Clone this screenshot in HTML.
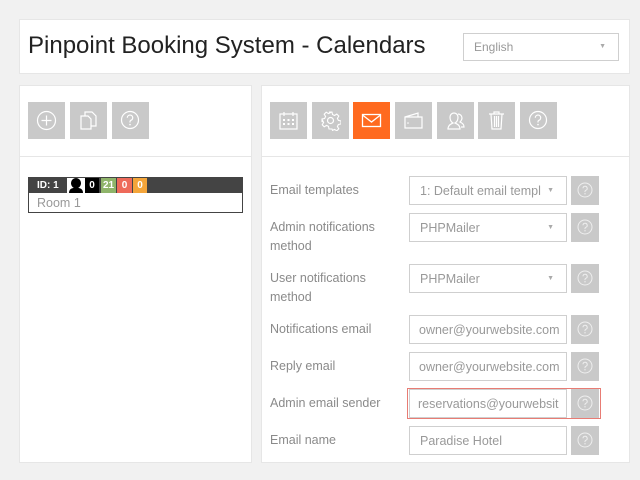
<!DOCTYPE html>
<html><head><meta charset="utf-8"><style>
*{margin:0;padding:0;box-sizing:border-box}
body{width:640px;height:480px;background:#f1f1f1;font-family:"Liberation Sans",sans-serif;position:relative;overflow:hidden}
.a{position:absolute}
.box{background:#fff;border:1px solid #e6e6e6}
.btn{position:absolute;width:37px;height:37px;background:#c9c9c9;top:102px}
.btn svg{position:absolute;left:8px;top:8px}
.lbl{position:absolute;left:270px;font-size:12.5px;color:#8a8a8a;line-height:19px}
.in{position:absolute;left:409px;width:158px;height:29px;border:1px solid #cfcfcf;background:#fff;font-size:12.5px;color:#999;padding-left:10px;line-height:28px;white-space:nowrap;overflow:hidden}
.in .ar{position:absolute;right:12px;top:0;font-size:7px;color:#aaa}
.hb{position:absolute;left:571px;width:28px;height:29px;background:#c9c9c9}
.hb svg{position:absolute;left:6px;top:6px}
</style></head><body>
<div class="a box" style="left:19px;top:19px;width:611px;height:55px"></div>
<div class="a" style="left:28px;top:32px;font-size:24px;color:#222;letter-spacing:0px">Pinpoint Booking System - Calendars</div>
<div class="a" style="left:463px;top:33px;width:156px;height:28px;border:1px solid #cfcfcf;background:#fff;font-size:12px;color:#999;padding-left:10px;line-height:26px">English<span style="position:absolute;right:12px;font-size:7px;color:#aaa">▼</span></div>

<div class="a box" style="left:19px;top:85px;width:233px;height:378px"></div>
<div class="a" style="left:20px;top:156px;width:231px;height:1px;background:#e6e6e6"></div>
<div class="a box" style="left:261px;top:85px;width:369px;height:378px"></div>
<div class="a" style="left:262px;top:156px;width:367px;height:1px;background:#e6e6e6"></div>

<svg width="0" height="0" style="position:absolute"><defs>
<g id="q"><circle cx="10" cy="10" r="8.5" fill="none" stroke="#fff" stroke-width="1.2"/><path d="M7.3 7.8a2.7 2.7 0 1 1 3.6 2.5c-.7.3-.9.7-.9 1.4v.8" fill="none" stroke="#fff" stroke-width="1.2"/><circle cx="10" cy="14.6" r=".8" fill="#fff"/></g>
<g id="s"><circle cx="8" cy="8" r="7" fill="none" stroke="#eee" stroke-width="1"/><path d="M6 6.3a2.1 2.1 0 1 1 2.8 2c-.5.2-.8.6-.8 1.1v.7" fill="none" stroke="#eee" stroke-width="1"/><circle cx="8" cy="11.8" r=".7" fill="#eee"/></g>
</defs></svg>

<div class="btn" style="left:28px"><svg width="21" height="21"><circle cx="10.5" cy="10.5" r="9" fill="none" stroke="#fff" stroke-width="1.2"/><path d="M10.5 5.5v10M5.5 10.5h10" stroke="#fff" stroke-width="1.2"/></svg></div>
<div class="btn" style="left:70px"><svg width="21" height="21"><path d="M3 6h7l3 3v10H3z M7 6V2h7l4 4v10h-5" fill="none" stroke="#fff" stroke-width="1.2"/></svg></div>
<div class="btn" style="left:112px"><svg width="21" height="21"><use href="#q"/></svg></div>

<div class="btn" style="left:270px"><svg width="21" height="21"><rect x="2" y="4" width="17" height="15" fill="none" stroke="#fff" stroke-width="1.2"/><path d="M6 2v4M15 2v4" stroke="#fff" stroke-width="1.2"/><g fill="#fff"><rect x="5" y="9" width="2" height="2"/><rect x="9.5" y="9" width="2" height="2"/><rect x="14" y="9" width="2" height="2"/><rect x="5" y="13" width="2" height="2"/><rect x="9.5" y="13" width="2" height="2"/><rect x="14" y="13" width="2" height="2"/></g></svg></div>
<div class="btn" style="left:312px"><svg width="21" height="21"><circle cx="10.5" cy="10.5" r="3" fill="none" stroke="#fff" stroke-width="1.2"/><path d="M9 2h3l.5 2.5 2 1 2.3-1.4 2 2-1.4 2.3 1 2 2.6.6v3l-2.6.5-1 2 1.4 2.3-2 2-2.3-1.4-2 1L12 19H9l-.5-2.6-2-1-2.3 1.4-2-2 1.4-2.3-1-2L2 12V9l2.6-.5 1-2L4.2 4.2l2-2 2.3 1.4 2-1z" fill="none" stroke="#fff" stroke-width="1.1"/></svg></div>
<div class="btn" style="left:353px;background:#ff6a1f"><svg width="21" height="21"><rect x="1.5" y="4.5" width="18" height="12" fill="none" stroke="#fff" stroke-width="1.3"/><path d="M1.5 5l9 7 9-7" fill="none" stroke="#fff" stroke-width="1.3"/></svg></div>
<div class="btn" style="left:395px"><svg width="21" height="21"><path d="M2 7h17v11H2z M2 7l13-4v4" fill="none" stroke="#fff" stroke-width="1.2"/><circle cx="5" cy="13" r=".8" fill="#fff"/></svg></div>
<div class="btn" style="left:437px"><svg width="21" height="21"><path d="M3 19c0-4 3-5 5-6-2-1-3-3-3-6a4 4 0 0 1 8 0c0 3-1 5-3 6 2 1 5 2 5 6z M13 4a4 4 0 0 1 4 4c0 2-1 3-2 4 2 1 4 2 4 5h-3" fill="none" stroke="#fff" stroke-width="1.2"/></svg></div>
<div class="btn" style="left:478px"><svg width="21" height="21"><path d="M3 4h15M8 4V2h5v2M5 4l1 15h9l1-15M8.5 6v11M10.5 6v11M12.5 6v11" fill="none" stroke="#fff" stroke-width="1.2"/></svg></div>
<div class="btn" style="left:520px"><svg width="21" height="21"><use href="#q"/></svg></div>

<div class="a" style="left:28px;top:177px;width:215px;height:36px;border:1px solid #444;background:#fff"></div>
<div class="a" style="left:28px;top:177px;width:215px;height:16px;background:#444"></div>
<div class="a" style="left:37px;top:178px;font-size:10px;color:#fff;font-weight:bold;line-height:15px">ID: 1</div>
<div class="a" style="left:67px;top:178px;width:18px;height:15px;background:#fff"><svg width="18" height="15"><path d="M2 15c0-4 3-5 5-5-2-1-3-3-3-5a5 5 0 0 1 10 0c0 2-1 4-3 5 2 0 5 1 5 5z" fill="#000"/></svg></div>
<div class="a" style="left:85px;top:178px;width:14px;height:15px;background:#000;color:#fff;font-size:10px;font-weight:bold;text-align:center;line-height:15px">0</div>
<div class="a" style="left:101px;top:178px;width:15px;height:15px;background:#8fb46a;color:#fff;font-size:10px;font-weight:bold;text-align:center;line-height:15px">21</div>
<div class="a" style="left:117px;top:178px;width:15px;height:15px;background:#ee6a5a;color:#fff;font-size:10px;font-weight:bold;text-align:center;line-height:15px">0</div>
<div class="a" style="left:133px;top:178px;width:14px;height:15px;background:#f4a53a;color:#fff;font-size:10px;font-weight:bold;text-align:center;line-height:15px">0</div>
<div class="a" style="left:37px;top:195px;font-size:12.5px;color:#999;line-height:17px">Room 1</div>

<div class="lbl" style="top:181px">Email templates</div>
<div class="in" style="top:176px">1: Default email templ<span class="ar">▼</span></div>
<div class="hb" style="top:176px"><svg width="17" height="17"><use href="#s"/></svg></div>

<div class="lbl" style="top:218px">Admin notifications<br>method</div>
<div class="in" style="top:213px">PHPMailer<span class="ar">▼</span></div>
<div class="hb" style="top:213px"><svg width="17" height="17"><use href="#s"/></svg></div>

<div class="lbl" style="top:269px">User notifications<br>method</div>
<div class="in" style="top:264px">PHPMailer<span class="ar">▼</span></div>
<div class="hb" style="top:264px"><svg width="17" height="17"><use href="#s"/></svg></div>

<div class="lbl" style="top:320px">Notifications email</div>
<div class="in" style="top:315px;padding-left:9px">owner@yourwebsite.com</div>
<div class="hb" style="top:315px"><svg width="17" height="17"><use href="#s"/></svg></div>

<div class="lbl" style="top:357px">Reply email</div>
<div class="in" style="top:352px;padding-left:9px">owner@yourwebsite.com</div>
<div class="hb" style="top:352px"><svg width="17" height="17"><use href="#s"/></svg></div>

<div class="a" style="left:407px;top:388px;width:194px;height:31px;border:1px solid #e87c74"></div>
<div class="lbl" style="top:394px">Admin email sender</div>
<div class="in" style="top:389px;padding-left:8px">reservations@yourwebsit</div>
<div class="hb" style="top:389px"><svg width="17" height="17"><use href="#s"/></svg></div>

<div class="lbl" style="top:431px">Email name</div>
<div class="in" style="top:426px">Paradise Hotel</div>
<div class="hb" style="top:426px"><svg width="17" height="17"><use href="#s"/></svg></div>
</body></html>
